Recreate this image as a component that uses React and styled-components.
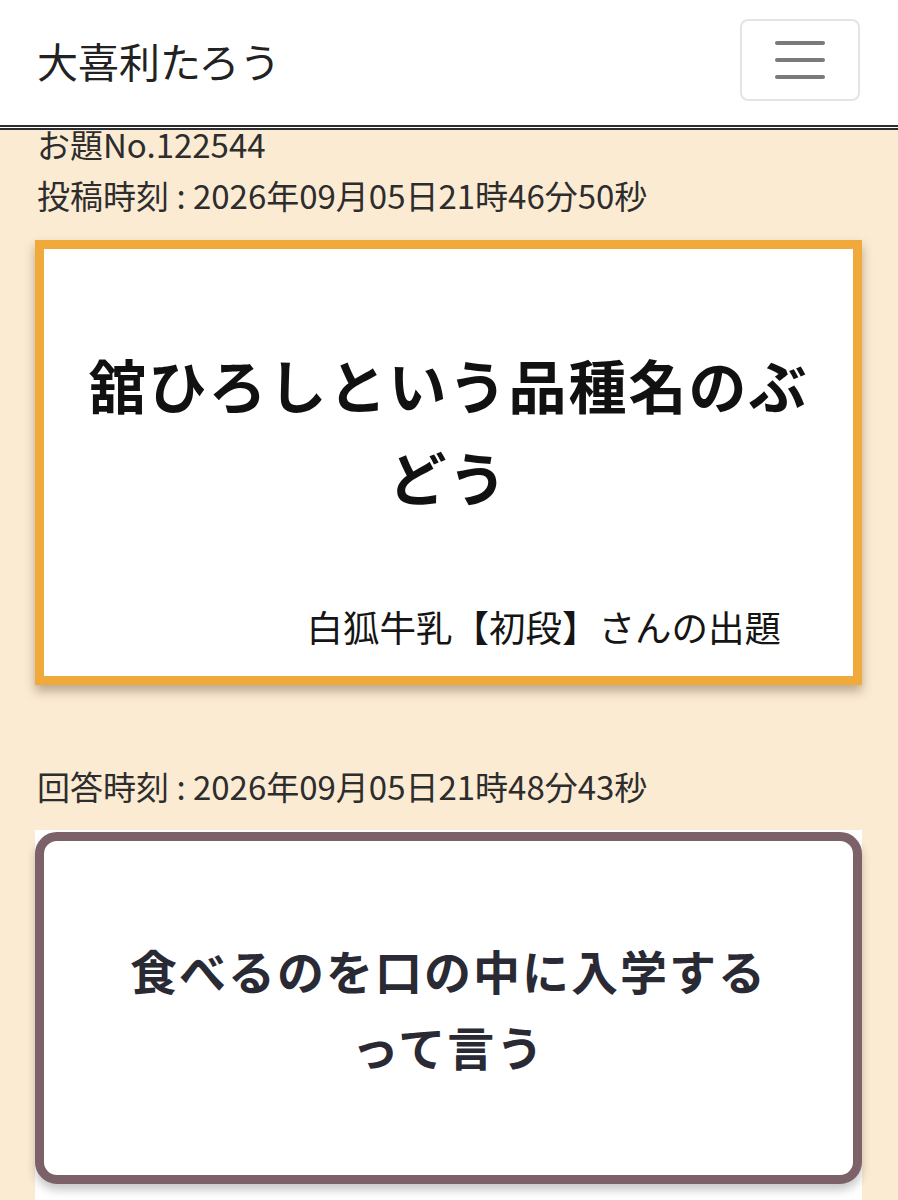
import React from "react";
import styled, { createGlobalStyle } from "styled-components";

const GlobalStyle = createGlobalStyle`
  html, body {
    margin: 0;
    padding: 0;
    background: #fcebd3;
  }
  body {
    font-family: "Noto Sans CJK JP", "Noto Sans", sans-serif;
    color: #2b2b2b;
  }
  * { box-sizing: border-box; }
`;

const Header = styled.header`
  position: fixed;
  top: 0;
  left: 0;
  right: 0;
  z-index: 10;
  height: 130px;
  background: #ffffff;
  border-bottom: 5px double #2a2e33;
  display: flex;
  align-items: center;
  justify-content: space-between;
  padding: 0 38px 4px 37px;
`;

const Brand = styled.div`
  font-size: 41px;
  font-weight: 400;
  color: #222222;
  line-height: 1;
`;

const Toggler = styled.button`
  width: 120px;
  height: 82px;
  background: #ffffff;
  border: 2px solid #e4e4e4;
  border-radius: 8px;
  display: flex;
  flex-direction: column;
  align-items: center;
  justify-content: center;
  gap: 13px;
  padding: 0;
  margin-bottom: 2px;
`;

const Bar = styled.span`
  display: block;
  width: 50px;
  height: 4px;
  border-radius: 2px;
  background: #7a7a7a;
`;

const Main = styled.main`
  padding: 119px 36px 0 35px;
  display: flex;
  flex-direction: column;
`;

const Meta = styled.div`
  font-size: 33px;
  line-height: 51px;
  color: #2d2d2d;
  padding-left: 2px;
  white-space: pre;
  margin-top: ${(p) => p.$top || 0}px;
`;

const OdaiCard = styled.section`
  margin-top: 19px;
  background: #ffffff;
  border: 9px solid #f0a93b;
  box-shadow: 0 6px 10px rgba(60, 40, 10, 0.35);
  padding: 89px 24px 22px;
  display: flex;
  flex-direction: column;
`;

const OdaiTitle = styled.h1`
  margin: 0;
  text-align: center;
  font-size: 58px;
  line-height: 92px;
  font-weight: 700;
  color: #111111;
  letter-spacing: 2px;
`;

const Author = styled.div`
  margin-top: 78px;
  padding-right: 48px;
  text-align: right;
  font-size: 36.5px;
  line-height: 54px;
  color: #151515;
  font-weight: 400;
`;

const AnswerWrap = styled.div`
  margin-top: 18px;
  background: #ffffff;
  padding-top: 2px;
  padding-bottom: 40px;
`;

const AnswerCard = styled.section`
  height: 352px;
  background: #ffffff;
  border: 9px solid #7d6169;
  border-radius: 22px;
  box-shadow: 0 6px 10px rgba(0, 0, 0, 0.22);
  display: flex;
  align-items: center;
  justify-content: center;
  padding: 0 40px;
`;

const AnswerText = styled.p`
  margin: 0;
  text-align: center;
  font-size: 47px;
  line-height: 76px;
  font-weight: 700;
  color: #2a2a35;
  letter-spacing: 2px;
`;

export default function App() {
  return (
    <>
      <GlobalStyle />
      <Header>
        <Brand>大喜利たろう</Brand>
        <Toggler aria-label="menu">
          <Bar />
          <Bar />
          <Bar />
        </Toggler>
      </Header>
      <Main>
        <Meta>お題No.122544</Meta>
        <Meta>投稿時刻 : 2026年09月05日21時46分50秒</Meta>
        <OdaiCard>
          <OdaiTitle>
            舘ひろしという品種名のぶ
            <br />
            どう
          </OdaiTitle>
          <Author>白狐牛乳【初段】さんの出題</Author>
        </OdaiCard>
        <Meta $top={76}>回答時刻 : 2026年09月05日21時48分43秒</Meta>
        <AnswerWrap>
          <AnswerCard>
            <AnswerText>
              食べるのを口の中に入学する
              <br />
              って言う
            </AnswerText>
          </AnswerCard>
        </AnswerWrap>
      </Main>
    </>
  );
}
